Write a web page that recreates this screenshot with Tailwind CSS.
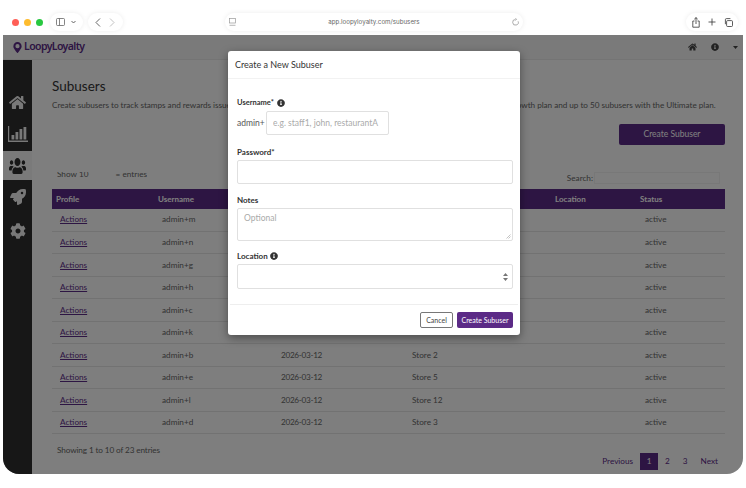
<!DOCTYPE html>
<html lang="en">
<head>
  <meta charset="UTF-8" />
  <title>LoopyLoyalty | Subusers</title>
  <script src="https://cdn.jsdelivr.net/npm/@tailwindcss/browser@4"></script>
</head>
<body class="bg-white font-['Lato',sans-serif] text-[#333]">

<div class="relative w-[746px] h-[488px] overflow-hidden bg-white">

  <!-- browser bar -->
  <div class="h-[35px] flex items-center pl-[12px] pr-[8px] pt-[9px]">
    <div class="flex gap-[5px] w-[34px]">
      <span class="w-[7px] h-[7px] rounded-full bg-[#ff5f57]"></span>
      <span class="w-[7px] h-[7px] rounded-full bg-[#febc2e]"></span>
      <span class="w-[7px] h-[7px] rounded-full bg-[#28c840]"></span>
    </div>
    <div class="ml-[4px] w-[33px] h-[18px] rounded-full bg-white shadow-[0_0_5px_rgba(0,0,0,0.08)] flex items-center justify-center gap-[6px]">
      <svg width="9" height="8" viewBox="0 0 9 8" fill="none" stroke="#666" stroke-width="0.8"><rect x="0.5" y="0.5" width="8" height="7" rx="1"/><path d="M3.5 0.5v7"/></svg>
      <svg width="5" height="4" viewBox="0 0 5 4" fill="none" stroke="#555" stroke-width="0.9"><path d="M0.5 1l2 2 2-2"/></svg>
    </div>
    <div class="ml-[5px] w-[35px] h-[18px] rounded-full bg-white shadow-[0_0_5px_rgba(0,0,0,0.08)] flex items-center justify-center gap-[8px]">
      <svg width="6" height="9" viewBox="0 0 6 9" fill="none" stroke="#555" stroke-width="0.9"><path d="M5 0.5l-4 4 4 4"/></svg>
      <svg width="6" height="9" viewBox="0 0 6 9" fill="none" stroke="#bbb" stroke-width="0.9"><path d="M1 0.5l4 4-4 4"/></svg>
    </div>
    <div class="ml-[102px] w-[300px] h-[18px] rounded-full bg-white shadow-[0_0_5px_rgba(0,0,0,0.08)] flex items-center justify-between px-[4px]">
      <svg width="7" height="8" viewBox="0 0 7 8" fill="none" stroke="#999" stroke-width="0.7"><rect x="0.5" y="0.5" width="6" height="4.5"/><path d="M0.5 7.3h6"/></svg>
      <span class="font-['Inter',sans-serif] text-[6.2px] text-[#666]">app.loopyloyalty.com/subusers</span>
      <svg width="7" height="8" viewBox="0 0 7 8" fill="none" stroke="#888" stroke-width="0.7"><path d="M3.5 1.5a2.8 2.8 0 1 0 2.6 1.8M3.5 0.2l1 1.2-1 1.1"/></svg>
    </div>
    <div class="ml-[163px] w-[52px] h-[18px] rounded-full bg-white shadow-[0_0_5px_rgba(0,0,0,0.08)] flex items-center justify-center gap-[8px]">
      <svg width="8" height="11" viewBox="0 0 8 11" fill="none" stroke="#333" stroke-width="0.8"><path d="M2.5 4H0.8v6.2h6.4V4H5.5M4 7V0.6M2.3 2.2L4 0.6l1.7 1.6"/></svg>
      <svg width="8" height="8" viewBox="0 0 8 8" fill="none" stroke="#333" stroke-width="0.8"><path d="M4 0.5v7M0.5 4h7"/></svg>
      <svg width="9" height="9" viewBox="0 0 9 9" fill="none" stroke="#333" stroke-width="0.8"><rect x="2.6" y="2.6" width="5.9" height="5.9" rx="1"/><path d="M1.4 6.2V1.6a1 1 0 0 1 1-1h4"/></svg>
    </div>
  </div>

  <!-- app window -->
  <div class="relative ml-[3px] w-[740px] h-[439px] rounded-b-[16px] overflow-hidden bg-[#fdfdfd]">

    <div class="h-[25px] bg-[#f5f5f5] border-b border-[#e8e8e8] flex items-center pl-[10px] pr-[5px]">
      <svg width="9" height="11" viewBox="0 0 384 512" fill="#5b2a86"><path fill-rule="evenodd" d="M192 0C86 0 0 86 0 192c0 77 27 99 172 310a24 24 0 0 0 40 0c145-211 172-233 172-310C384 86 298 0 192 0zm0 290a98 98 0 1 1 0-196 98 98 0 0 1 0 196z"/></svg>
      <span class="ml-[2px] font-['Noto_Sans',sans-serif] text-[10.5px] font-semibold tracking-[-0.6px] text-[#5b2a86]">LoopyLoyalty</span>
      <div class="ml-auto flex items-center">
        <svg width="9" height="8" viewBox="0 0 576 512" fill="#444"><path d="M280.37 148.26L96 300.11V464a16 16 0 0 0 16 16l112.06-.29a16 16 0 0 0 15.92-16V368a16 16 0 0 1 16-16h64a16 16 0 0 1 16 16v95.64a16 16 0 0 0 16 16.05L464 480a16 16 0 0 0 16-16V300L295.67 148.26a12.19 12.19 0 0 0-15.3 0zM571.6 251.47L488 182.56V44.05a12 12 0 0 0-12-12h-56a12 12 0 0 0-12 12v72.61L318.47 43a48 48 0 0 0-61 0L4.34 251.47a12 12 0 0 0-1.6 16.9l25.5 31A12 12 0 0 0 45.15 301l235.22-193.74a12.19 12.19 0 0 1 15.3 0L530.9 301a12 12 0 0 0 16.9-1.6l25.5-31a12 12 0 0 0-1.7-16.93z"/></svg>
        <svg class="ml-[14px]" width="8" height="8" viewBox="0 0 512 512" fill="#444"><path d="M256 8C119.043 8 8 119.083 8 256c0 136.997 111.043 248 248 248s248-111.003 248-248C504 119.083 392.957 8 256 8zm0 110c23.196 0 42 18.804 42 42s-18.804 42-42 42-42-18.804-42-42 18.804-42 42-42zm56 254c0 6.627-5.373 12-12 12h-88c-6.627 0-12-5.373-12-12v-24c0-6.627 5.373-12 12-12h12v-64h-12c-6.627 0-12-5.373-12-12v-24c0-6.627 5.373-12 12-12h64c6.627 0 12 5.373 12 12v100h12c6.627 0 12 5.373 12 12v24z"/></svg>
        <svg class="ml-[14px]" width="5" height="3" viewBox="0 0 5 3" fill="#444"><path d="M0 0h5L2.5 3z"/></svg>
      </div>
    </div>

    <div class="flex h-[414px]">
      <!-- sidebar -->
      <div class="w-[29px] shrink-0 bg-[#2e2e2e] pt-[28px] flex flex-col items-center">
        <div class="h-[29px] w-full flex items-center justify-center">
          <svg width="17" height="15" viewBox="0 0 576 512" fill="#f0f0f0"><path d="M280.37 148.26L96 300.11V464a16 16 0 0 0 16 16l112.06-.29a16 16 0 0 0 15.92-16V368a16 16 0 0 1 16-16h64a16 16 0 0 1 16 16v95.64a16 16 0 0 0 16 16.05L464 480a16 16 0 0 0 16-16V300L295.67 148.26a12.19 12.19 0 0 0-15.3 0zM571.6 251.47L488 182.56V44.05a12 12 0 0 0-12-12h-56a12 12 0 0 0-12 12v72.61L318.47 43a48 48 0 0 0-61 0L4.34 251.47a12 12 0 0 0-1.6 16.9l25.5 31A12 12 0 0 0 45.15 301l235.22-193.74a12.19 12.19 0 0 1 15.3 0L530.9 301a12 12 0 0 0 16.9-1.6l25.5-31a12 12 0 0 0-1.7-16.93z"/></svg>
        </div>
        <div class="h-[34px] w-full flex items-center justify-center">
          <svg width="20" height="16" viewBox="0 0 20 16" fill="#f0f0f0"><path d="M0 0h1.2v14.6H20V16H0z"/><rect x="3.5" y="9" width="2.8" height="4.5"/><rect x="7.5" y="6" width="2.8" height="7.5"/><rect x="11.5" y="3" width="2.8" height="10.5"/><rect x="15.5" y="1" width="2.8" height="12.5"/></svg>
        </div>
        <div class="h-[29px] w-full bg-[#f5f5f5] flex items-center justify-center">
          <svg width="17" height="16" viewBox="0 32 640 448" preserveAspectRatio="none" fill="#2e2e2e"><path d="M96 224c35.3 0 64-28.7 64-64s-28.7-64-64-64-64 28.7-64 64 28.7 64 64 64zm448 0c35.3 0 64-28.7 64-64s-28.7-64-64-64-64 28.7-64 64 28.7 64 64 64zm32 32h-64c-17.6 0-33.5 7.1-45.1 18.6 40.3 22.1 68.9 62 75.1 109.4h66c17.7 0 32-14.3 32-32v-32c0-35.3-28.7-64-64-64zm-256 0c61.9 0 112-50.1 112-112S381.9 32 320 32 208 82.1 208 144s50.1 112 112 112zm76.8 32h-8.3c-20.8 10-43.9 16-68.5 16s-47.6-6-68.5-16h-8.3C179.6 288 128 339.6 128 403.2V432c0 26.5 21.5 48 48 48h288c26.5 0 48-21.5 48-48v-28.8c0-63.6-51.6-115.2-115.2-115.2zm-223.7-13.4C161.5 263.1 145.6 256 128 256H64c-35.3 0-64 28.7-64 64v32c0 17.7 14.3 32 32 32h65.9c6.3-47.4 34.9-87.3 75.2-109.4z"/></svg>
        </div>
        <div class="h-[34px] w-full flex items-center justify-center">
          <svg width="16" height="16" viewBox="0 0 512 512" fill="#f0f0f0"><path d="M505.12019,19.09375c-1.18945-5.53125-6.65819-11-12.207-12.1875C460.716,0,435.507,0,410.40747,0,307.17523,0,245.26909,55.20312,199.05238,128H94.83772c-16.34763.01562-35.55658,11.875-42.88664,26.48438L2.51562,253.29688A28.4,28.4,0,0,0,0,264a24.00867,24.00867,0,0,0,24.00582,24H127.81618l-22.47457,22.46875c-11.36521,11.36133-12.99607,32.25781,0,45.25L156.24582,406.625c11.15623,11.1875,32.15619,13.15625,45.27726,0l22.47457-22.46875V488a24.00867,24.00867,0,0,0,24.00581,24,28.55934,28.55934,0,0,0,10.707-2.51562l98.72834-49.39063c14.62888-7.29687,26.50776-26.5,26.50776-42.85937V312.79688c72.59753-46.3125,128.03493-108.40626,128.03493-211.09376C512.07526,76.5,512.07526,51.29688,505.12019,19.09375ZM384.04033,168A40,40,0,1,1,424.05,128,40.02322,40.02322,0,0,1,384.04033,168Z"/></svg>
        </div>
        <div class="h-[33px] w-full flex items-center justify-center">
          <svg width="16" height="16" viewBox="0 0 512 512" fill="#f0f0f0"><path d="M487.4 315.7l-42.6-24.6c4.3-23.2 4.3-47 0-70.2l42.6-24.6c4.9-2.8 7.1-8.6 5.5-14-11.1-35.6-30-67.8-54.7-94.6-3.8-4.1-10-5.1-14.8-2.3L380.8 110c-17.9-15.4-38.5-27.3-60.8-35.1V25.8c0-5.6-3.9-10.5-9.4-11.7-36.7-8.2-74.3-7.8-109.2 0-5.5 1.2-9.4 6.1-9.4 11.7V75c-22.2 7.9-42.8 19.8-60.8 35.1L88.7 85.5c-4.9-2.8-11-1.9-14.8 2.3-24.7 26.7-43.6 58.9-54.7 94.6-1.7 5.4.6 11.2 5.5 14L67.3 221c-4.3 23.2-4.3 47 0 70.2l-42.6 24.6c-4.9 2.8-7.1 8.6-5.5 14 11.1 35.6 30 67.8 54.7 94.6 3.8 4.1 10 5.1 14.8 2.3l42.6-24.6c17.9 15.4 38.5 27.3 60.8 35.1v49.2c0 5.6 3.9 10.5 9.4 11.7 36.7 8.2 74.3 7.8 109.2 0 5.5-1.2 9.4-6.1 9.4-11.7v-49.2c22.2-7.9 42.8-19.8 60.8-35.1l42.6 24.6c4.9 2.8 11 1.9 14.8-2.3 24.7-26.7 43.6-58.9 54.7-94.6 1.5-5.5-.7-11.3-5.6-14.1zM256 336c-44.1 0-80-35.9-80-80s35.9-80 80-80 80 35.9 80 80-35.9 80-80 80z"/></svg>
        </div>
      </div>

      <!-- content -->
      <div class="flex-1 min-w-0 pl-[20px] pr-[18px] pt-[18px] text-[8.2px] text-[#666]">
        <h1 class="text-[13.5px] leading-[17px] text-[#333]">Subusers</h1>
        <p class="mt-[4px] leading-[12px] whitespace-nowrap tracking-[-0.04px]">Create subusers to track stamps and rewards issued by each staff member or location. You can create up to 10 subusers with the Growth plan and up to 50 subusers with the Ultimate plan.</p>
        <div class="mt-[13px] flex justify-end">
          <button class="w-[106px] h-[21px] rounded-[2px] bg-[#5b2a86] text-white text-[8.5px]">Create Subuser</button>
        </div>
        <div class="mt-[27px] h-[14px] flex items-start justify-between pl-[5px] pr-[5px]">
          <div class="h-[7px] flex items-end overflow-hidden"><span class="leading-[9px] whitespace-pre">Show 10&nbsp;&nbsp;&nbsp;&nbsp;&nbsp;&nbsp;&nbsp;&nbsp;&nbsp;&nbsp;&nbsp;&nbsp;&nbsp;= entries</span></div>
          <div class="flex items-center gap-[1px]">Search:<div class="w-[126px] h-[12px] border border-[#f0f0f0]"></div></div>
        </div>
        <table class="mt-[3px] w-[673px] table-fixed border-collapse text-left">
          <colgroup><col class="w-[102px]"><col class="w-[119px]"><col class="w-[135px]"><col class="w-[143px]"><col class="w-[85px]"><col class="w-[89px]"></colgroup>
          <thead class="bg-[#5b2a86] text-white font-bold text-[8px]">
            <tr class="h-[19.5px]"><th class="pl-[4px]">Profile</th><th class="pl-[4px]">Username</th><th class="pl-[4px]">Created</th><th class="pl-[4px]">Notes</th><th class="pl-[4px]">Location</th><th class="pl-[4px]">Status</th></tr>
          </thead>
          <tbody>
            <tr class="h-[22.5px] border-b border-[#e5e5e5]"><td class="pl-[8px]"><a class="underline text-[#5b2a86]">Actions</a></td><td class="pl-[8px]">admin+m</td><td class="pl-[8px] tracking-[-0.3px]">2026-03-12</td><td class="pl-[4px]">Store 8</td><td></td><td class="pl-[9px]">active</td></tr>
            <tr class="h-[22.5px] border-b border-[#e5e5e5]"><td class="pl-[8px]"><a class="underline text-[#5b2a86]">Actions</a></td><td class="pl-[8px]">admin+n</td><td class="pl-[8px] tracking-[-0.3px]">2026-03-12</td><td class="pl-[4px]">Store 9</td><td></td><td class="pl-[9px]">active</td></tr>
            <tr class="h-[22.5px] border-b border-[#e5e5e5]"><td class="pl-[8px]"><a class="underline text-[#5b2a86]">Actions</a></td><td class="pl-[8px]">admin+g</td><td class="pl-[8px] tracking-[-0.3px]">2026-03-12</td><td class="pl-[4px]">Store 7</td><td></td><td class="pl-[9px]">active</td></tr>
            <tr class="h-[22.5px] border-b border-[#e5e5e5]"><td class="pl-[8px]"><a class="underline text-[#5b2a86]">Actions</a></td><td class="pl-[8px]">admin+h</td><td class="pl-[8px] tracking-[-0.3px]">2026-03-12</td><td class="pl-[4px]">Store 6</td><td></td><td class="pl-[9px]">active</td></tr>
            <tr class="h-[22.5px] border-b border-[#e5e5e5]"><td class="pl-[8px]"><a class="underline text-[#5b2a86]">Actions</a></td><td class="pl-[8px]">admin+c</td><td class="pl-[8px] tracking-[-0.3px]">2026-03-12</td><td class="pl-[4px]">Store 4</td><td></td><td class="pl-[9px]">active</td></tr>
            <tr class="h-[22.5px] border-b border-[#e5e5e5]"><td class="pl-[8px]"><a class="underline text-[#5b2a86]">Actions</a></td><td class="pl-[8px]">admin+k</td><td class="pl-[8px] tracking-[-0.3px]">2026-03-12</td><td class="pl-[4px]">Store 11</td><td></td><td class="pl-[9px]">active</td></tr>
            <tr class="h-[22.5px] border-b border-[#e5e5e5]"><td class="pl-[8px]"><a class="underline text-[#5b2a86]">Actions</a></td><td class="pl-[8px]">admin+b</td><td class="pl-[8px] tracking-[-0.3px]">2026-03-12</td><td class="pl-[4px]">Store 2</td><td></td><td class="pl-[9px]">active</td></tr>
            <tr class="h-[22.5px] border-b border-[#e5e5e5]"><td class="pl-[8px]"><a class="underline text-[#5b2a86]">Actions</a></td><td class="pl-[8px]">admin+e</td><td class="pl-[8px] tracking-[-0.3px]">2026-03-12</td><td class="pl-[4px]">Store 5</td><td></td><td class="pl-[9px]">active</td></tr>
            <tr class="h-[22.5px] border-b border-[#e5e5e5]"><td class="pl-[8px]"><a class="underline text-[#5b2a86]">Actions</a></td><td class="pl-[8px]">admin+l</td><td class="pl-[8px] tracking-[-0.3px]">2026-03-12</td><td class="pl-[4px]">Store 12</td><td></td><td class="pl-[9px]">active</td></tr>
            <tr class="h-[22.5px] border-b border-[#e5e5e5]"><td class="pl-[8px]"><a class="underline text-[#5b2a86]">Actions</a></td><td class="pl-[8px]">admin+d</td><td class="pl-[8px] tracking-[-0.3px]">2026-03-12</td><td class="pl-[4px]">Store 3</td><td></td><td class="pl-[9px]">active</td></tr>
          </tbody>
        </table>
        <div class="mt-[9px] flex justify-between pl-[5px] pr-[7px]">
          <span class="leading-[14px] tracking-[-0.12px]">Showing 1 to 10 of 23 entries</span>
          <div class="mt-[10px] flex items-center h-[17px] text-[#5b2a86]">
            <span>Previous</span>
            <span class="ml-[7px] w-[18px] h-[17px] bg-[#5b2a86] text-white flex items-center justify-center">1</span>
            <span class="ml-[7px]">2</span>
            <span class="ml-[13px]">3</span>
            <span class="ml-[13px]">Next</span>
          </div>
        </div>
      </div>
    </div>
  </div>

  <!-- modal backdrop, covers the app window only -->
  <div class="absolute left-[3px] top-[35px] w-[740px] h-[439px] rounded-b-[16px] bg-black/50"></div>

  <!-- modal -->
  <div class="absolute left-[228px] top-[51px] w-[292px] h-[284px] bg-white rounded-[3px] shadow-[0_3px_10px_rgba(0,0,0,0.4)] flex flex-col text-[#333]">
    <div class="h-[28px] border-b border-[#f2f2f2] flex items-center px-[7px] text-[9px]">Create a New Subuser</div>
    <div class="flex-1 px-[9px] pt-[18px]">
      <div class="h-[12px] flex items-center gap-[3px] text-[7.5px] font-bold">
        Username*
        <svg width="8" height="8" viewBox="0 0 512 512" fill="#333"><path d="M256 8C119.043 8 8 119.083 8 256c0 136.997 111.043 248 248 248s248-111.003 248-248C504 119.083 392.957 8 256 8zm0 110c23.196 0 42 18.804 42 42s-18.804 42-42 42-42-18.804-42-42 18.804-42 42-42zm56 254c0 6.627-5.373 12-12 12h-88c-6.627 0-12-5.373-12-12v-24c0-6.627 5.373-12 12-12h12v-64h-12c-6.627 0-12-5.373-12-12v-24c0-6.627 5.373-12 12-12h64c6.627 0 12 5.373 12 12v100h12c6.627 0 12 5.373 12 12v24z"/></svg>
      </div>
      <div class="mt-[2px] flex items-center text-[8.5px] text-[#555]">
        <span class="w-[28px]">admin+</span>
        <input class="ml-[1px] w-[123px] h-[24px] rounded-[2px] border border-[#e0e0e0] px-[6px] text-[8.5px] placeholder:text-[#aaa]" placeholder="e.g. staff1, john, restaurantA" />
      </div>
      <div class="mt-[10px] h-[14px] flex items-center text-[8px] font-bold">Password*</div>
      <input class="mt-[1px] block w-[276px] h-[24px] rounded-[2px] border border-[#e0e0e0]" />
      <div class="mt-[9px] h-[14px] flex items-center text-[8px] font-bold">Notes</div>
      <div class="relative mt-[1px] w-[276px] h-[33px] rounded-[2px] border border-[#e0e0e0] px-[6px] pt-[3px] text-[8.5px] text-[#aaa]">
        Optional
        <svg class="absolute right-[1px] bottom-[1px]" width="5" height="5" viewBox="0 0 5 5" fill="none" stroke="#888" stroke-width="0.5"><path d="M0.5 4.5l4-4M2.5 4.5l2-2"/></svg>
      </div>
      <div class="mt-[8px] h-[14px] flex items-center gap-[2px] text-[8px] font-bold">
        Location
        <svg width="8" height="8" viewBox="0 0 512 512" fill="#333"><path d="M256 8C119.043 8 8 119.083 8 256c0 136.997 111.043 248 248 248s248-111.003 248-248C504 119.083 392.957 8 256 8zm0 110c23.196 0 42 18.804 42 42s-18.804 42-42 42-42-18.804-42-42 18.804-42 42-42zm56 254c0 6.627-5.373 12-12 12h-88c-6.627 0-12-5.373-12-12v-24c0-6.627 5.373-12 12-12h12v-64h-12c-6.627 0-12-5.373-12-12v-24c0-6.627 5.373-12 12-12h64c6.627 0 12 5.373 12 12v100h12c6.627 0 12 5.373 12 12v24z"/></svg>
      </div>
      <div class="mt-[1px] w-[276px] h-[25px] rounded-[2px] border border-[#e0e0e0] flex items-center justify-end pr-[4px]">
        <svg width="5" height="8" viewBox="0 0 5 8" fill="#777"><path d="M2.5 0L5 3H0zM0 5h5L2.5 8z"/></svg>
      </div>
    </div>
    <div class="mx-[2px] h-[31px] border-t border-[#eee] flex items-center justify-end gap-[4px] pr-[5px] text-[7px]">
      <button class="w-[33px] h-[16px] rounded-[2px] border border-[#777] bg-white text-[#444]">Cancel</button>
      <button class="w-[56px] h-[16px] rounded-[2px] bg-[#5b2a86] text-white">Create Subuser</button>
    </div>
  </div>

</div>
</body>
</html>
